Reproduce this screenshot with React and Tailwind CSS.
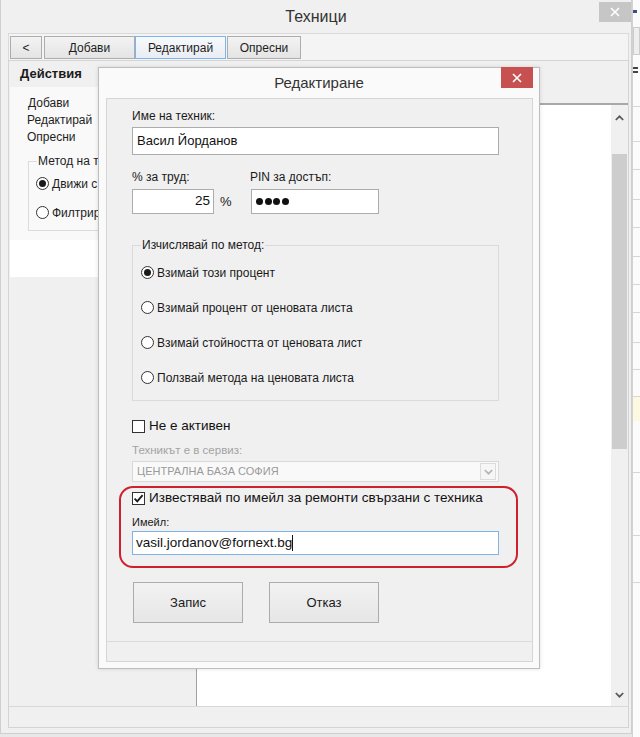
import React from "react";

function Radio({ checked }) {
  return (
    <span className="w-[13px] h-[13px] rounded-full border border-[#333333] bg-white flex items-center justify-center shrink-0">
      {checked && <span className="w-[7px] h-[7px] rounded-full bg-[#1a1a1a]" />}
    </span>
  );
}

function Check({ checked }) {
  return (
    <span className="w-[13px] h-[13px] border border-[#333333] bg-white flex items-center justify-center shrink-0">
      {checked && (
        <svg width="11" height="11" viewBox="0 0 11 11">
          <path d="M1.6 5.6 L4.3 8.4 L9.6 2.2" fill="none" stroke="#1a1a1a" strokeWidth="1.9" />
        </svg>
      )}
    </span>
  );
}

function XIcon() {
  return (
    <svg width="10" height="10" viewBox="0 0 10 10">
      <path d="M1 1 L9 9 M9 1 L1 9" stroke="#ffffff" strokeWidth="1.6" fill="none" />
    </svg>
  );
}

function Chevron({ up, color = "#555555" }) {
  return (
    <svg width="9" height="6" viewBox="0 0 9 6">
      <path d={up ? "M0.8 5 L4.5 1.3 L8.2 5" : "M0.8 1 L4.5 4.7 L8.2 1"} fill="none" stroke={color} strokeWidth="1.7" />
    </svg>
  );
}

const tbtn =
  "h-[23px] flex items-center justify-center text-[12px] text-[#1e1e1e] border border-[#adadad] bg-linear-to-b from-[#f3f3f3] to-[#e4e4e4]";

export default function App() {
  return (
    <div className="w-[640px] h-[737px] flex overflow-hidden bg-[#e8e8e8] font-['Liberation_Sans',Arial,sans-serif] text-[#111111]">
      {/* main window */}
      <div className="relative w-[632px] h-[734px] shrink-0 flex flex-col bg-[#f0f0f0] border-l border-r border-b border-[#cfcfcf]">
        {/* title bar */}
        <div className="h-[33px] grid grid-cols-[1fr_auto_1fr] items-start">
          <div />
          <div className="text-[16px] leading-[33px] text-[#333333]">Техници</div>
          <div className="flex justify-end pt-[2px]">
            <div className="w-[32px] h-[20px] bg-[#c6c6c6] flex items-center justify-center">
              <XIcon />
            </div>
          </div>
        </div>

        {/* toolbar */}
        <div className="ml-[7px] w-[621px] h-[27px] border-t border-l border-r border-[#dadada] bg-[#f4f4f4] flex items-start pt-[2px] pl-[1px]">
          <div className={tbtn + " w-[32px]"}>&lt;</div>
          <div className={tbtn + " w-[91px] ml-[2px]"}>Добави</div>
          <div className="h-[23px] w-[91px] flex items-center justify-center text-[12px] text-[#1e1e1e] border border-[#7eb4ea] bg-linear-to-b from-[#f6f9fc] to-[#e9eef4]">
            Редактирай
          </div>
          <div className={tbtn + " w-[74px] ml-[1px]"}>Опресни</div>
        </div>

        {/* body */}
        <div className="ml-[7px] w-[621px] h-[668px] border border-[#d4d4d4] flex flex-col">
          <div className="flex-1 flex min-h-0">
            {/* left column */}
            <div className="w-[187px] shrink-0 flex flex-col">
              <div className="h-[26px] pl-[11px] text-[13px] font-bold leading-[26px] text-[#1a1a1a]">Действия</div>
              <div className="ml-[1px] h-[153px] bg-[#f9f9f9] pt-[8px] text-[12px] text-[#1e1e1e]">
                <div className="h-[17px] leading-[17px] pl-[18px]">Добави</div>
                <div className="h-[17px] leading-[17px] pl-[17px]">Редактирай</div>
                <div className="h-[17px] leading-[17px] pl-[17px]">Опресни</div>
                <div className="ml-[18px] mt-[15px] w-[72px] h-[70px] border border-[#dcdcdc]">
                  <div className="-mt-[8px] ml-[8px] w-fit px-[1px] bg-[#f9f9f9] leading-[14px] h-[14px] whitespace-nowrap">
                    Метод на т
                  </div>
                  <div className="pt-[1px] pl-[7px]">
                    <div className="h-[29px] flex items-center">
                      <Radio checked />
                      <span className="ml-[3px] whitespace-nowrap">Движи с</span>
                    </div>
                    <div className="h-[29px] flex items-center">
                      <Radio />
                      <span className="ml-[3px] whitespace-nowrap">Филтрир</span>
                    </div>
                  </div>
                </div>
              </div>
              <div className="ml-[1px] h-[37px] bg-white" />
            </div>

            {/* right column */}
            <div className="flex-1 flex flex-col min-w-0">
              <div className="h-[44px] border-b-2 border-[#a8a8a8] bg-[#f0f0f0]" />
              <div className="flex-1 flex border-l border-[#a0a0a0] bg-white">
                <div className="flex-1" />
                <div className="w-[17px] bg-[#f0f0f0] flex flex-col">
                  <div className="h-[25px] flex items-center justify-center">
                    <Chevron up />
                  </div>
                  <div className="mt-[24px] mx-[1px] h-[295px] bg-[#cdcdcd]" />
                  <div className="flex-1" />
                  <div className="h-[22px] flex items-center justify-center">
                    <Chevron />
                  </div>
                </div>
              </div>
            </div>
          </div>
          <div className="h-[21px] border-t border-[#d8d8d8] bg-[#f0f0f0]" />
        </div>

        {/* dialog */}
        <div className="absolute left-[97px] top-[67px] w-[442px] h-[602px] bg-[#fafafa] border border-[#bdbdbd] shadow-[0_0_4px_rgba(0,0,0,0.12)] flex flex-col">
          <div className="h-[30px] grid grid-cols-[1fr_auto_1fr] items-start">
            <div />
            <div className="text-[15px] leading-[30px] text-[#333333]">Редактиране</div>
            <div className="flex justify-end">
              <div className="-mt-[1px] mr-[6px] w-[32px] h-[21px] bg-[#c75050] flex items-center justify-center">
                <XIcon />
              </div>
            </div>
          </div>

          <div className="ml-[7px] mr-[6px] h-[564px] border border-[#d5d5d5] bg-[#f0f0f0] flex flex-col">
            <div className="flex-1 pl-[25px]">
              <div className="w-[367px]">
                <div className="mt-[10px] h-[14px] leading-[14px] text-[12px] text-[#1a1a1a]">Име на техник:</div>
                <div className="mt-[4px] h-[28px] border border-[#acacac] bg-white flex items-center pl-[4px] text-[13px] text-[#111111]">
                  Васил Йорданов
                </div>

                <div className="mt-[15px] h-[14px] flex text-[12px] leading-[14px] text-[#1a1a1a]">
                  <span className="w-[118px]">% за труд:</span>
                  <span>PIN за достъп:</span>
                </div>
                <div className="mt-[5px] h-[25px] flex items-stretch">
                  <div className="w-[82px] border border-[#acacac] bg-white flex items-center justify-end pr-[3px] text-[13.5px] text-[#111111]">
                    25
                  </div>
                  <span className="ml-[6px] w-[31px] flex items-center text-[13px] text-[#1a1a1a]">%</span>
                  <div className="w-[128px] border border-[#acacac] bg-white flex items-center pl-[4px] gap-[1.5px]">
                    <span className="w-[7px] h-[7px] rounded-full bg-[#111111]" />
                    <span className="w-[7px] h-[7px] rounded-full bg-[#111111]" />
                    <span className="w-[7px] h-[7px] rounded-full bg-[#111111]" />
                    <span className="w-[7px] h-[7px] rounded-full bg-[#111111]" />
                  </div>
                </div>

                {/* method group */}
                <div className="mt-[31px] h-[156px] border border-[#dadada]">
                  <div className="-mt-[8px] ml-[8px] w-fit px-[1px] bg-[#f0f0f0] h-[14px] leading-[14px] text-[12px] text-[#1a1a1a]">
                    Изчислявай по метод:
                  </div>
                  <div className="pt-[3px] pl-[8px] text-[12px] text-[#1a1a1a]">
                    <div className="h-[35px] flex items-center">
                      <Radio checked />
                      <span className="ml-[3px]">Взимай този процент</span>
                    </div>
                    <div className="h-[35px] flex items-center">
                      <Radio />
                      <span className="ml-[3px]">Взимай процент от ценовата листа</span>
                    </div>
                    <div className="h-[35px] flex items-center">
                      <Radio />
                      <span className="ml-[3px]">Взимай стойността от ценовата лист</span>
                    </div>
                    <div className="h-[35px] flex items-center">
                      <Radio />
                      <span className="ml-[3px]">Ползвай метода на ценовата листа</span>
                    </div>
                  </div>
                </div>

                <div className="mt-[17px] h-[16px] flex items-center">
                  <Check />
                  <span className="ml-[4px] text-[13.5px] text-[#111111]">Не е активен</span>
                </div>
                <div className="mt-[9px] h-[14px] leading-[14px] text-[11.5px] text-[#a3a3a3]">Техникът е в сервиз:</div>
                <div className="mt-[4px] h-[21px] border border-[#d9d9d9] bg-[#f9f9f9] flex items-start">
                  <span className="flex-1 pl-[4px] leading-[19px] text-[11px] text-[#9a9a9a]">ЦЕНТРАЛНА БАЗА СОФИЯ</span>
                  <span className="mt-[1px] mr-[2px] w-[16px] h-[17px] border border-[#dcdcdc] bg-[#f6f6f6] flex items-center justify-center">
                    <Chevron color="#b5b5b5" />
                  </span>
                </div>

                {/* highlighted email block */}
                <div className="mt-[4px] -ml-[13px] -mr-[19px] h-[82px] border-2 border-[#d0202e] rounded-[14px] pl-[11px] pr-[17px] pt-[2px]">
                  <div className="h-[16px] flex items-center">
                    <Check checked />
                    <span className="ml-[4px] text-[13.5px] text-[#111111] whitespace-nowrap">
                      Известявай по имейл за ремонти свързани с техника
                    </span>
                  </div>
                  <div className="mt-[9px] h-[14px] leading-[14px] text-[11px] text-[#1a1a1a]">Имейл:</div>
                  <div className="mt-[2px] h-[24px] border border-[#7fb3e6] bg-white flex items-center pl-[3px] text-[13.5px] text-[#111111]">
                    <span>vasil.jordanov@fornext.bg</span>
                    <span className="w-[1px] h-[16px] bg-[#111111]" />
                  </div>
                </div>

                <div className="mt-[14px] flex">
                  <div className="ml-[1px] w-[110px] h-[41px] border border-[#acacac] bg-linear-to-b from-[#f2f2f2] to-[#e6e6e6] flex items-center justify-center text-[13px] text-[#1a1a1a]">
                    Запис
                  </div>
                  <div className="ml-[26px] w-[110px] h-[41px] border border-[#acacac] bg-linear-to-b from-[#f2f2f2] to-[#e6e6e6] flex items-center justify-center text-[13px] text-[#1a1a1a]">
                    Отказ
                  </div>
                </div>
              </div>
            </div>
            <div className="h-[20px] border-t border-[#dadada] bg-[#f0f0f0]" />
          </div>
        </div>
      </div>

      {/* edge of another window */}
      <div className="flex-1 h-[737px] bg-[#fbfbfb] border-l border-[#d2d2d2] flex flex-col">
        <div className="h-[10px]" />
        <div className="h-[3px] w-[4px] bg-[#3b4f8a]" />
        <div className="mt-[14px] h-[28px] border border-[#cccccc] bg-[#eeeeee]" />
        <div className="mt-[12px] h-[2px] w-[5px] bg-[#444444]" />
        <div className="mt-[2px] h-[2px] w-[5px] bg-[#444444]" />
        <div className="h-[34px] border-b border-[#d6d6d6]" />
        <div className="h-[35px] border-b border-[#d6d6d6]" />
        <div className="h-[28px] border-b border-[#d6d6d6]" />
        <div className="h-[30px] border-b border-[#d6d6d6]" />
        <div className="h-[28px] border-b border-[#d6d6d6]" />
        <div className="h-[29px] border-b border-[#d6d6d6]" />
        <div className="h-[28px] border-b border-[#d6d6d6]" />
        <div className="h-[28px] border-b border-[#d6d6d6]" />
        <div className="h-[30px] border-b border-[#d6d6d6]" />
        <div className="h-[27px] border-b border-[#d6d6d6]" />
        <div className="h-[27px] border-b border-[#d6d6d6]" />
        <div className="h-[24px] bg-[#fdf8e0]" />
        <div className="h-[52px] border-b border-[#d6d6d6]" />
        <div className="h-[63px] border-b border-[#d6d6d6]" />
        <div className="h-[47px] border-b border-[#d6d6d6]" />
        <div className="flex-1" />
      </div>
    </div>
  );
}
